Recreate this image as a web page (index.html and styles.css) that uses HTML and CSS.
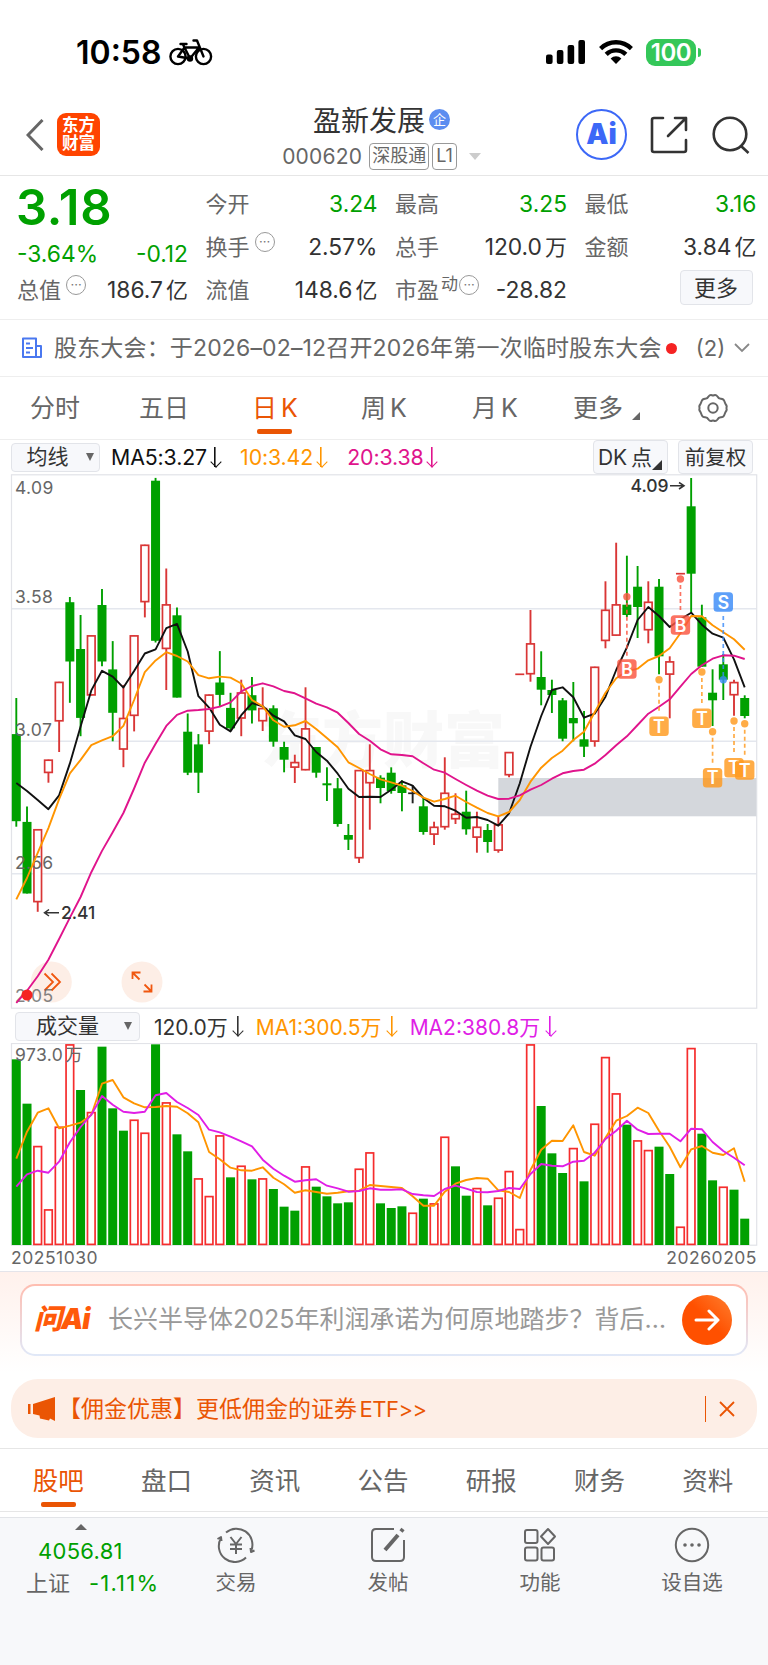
FILE: index.html
```html
<!DOCTYPE html>
<html lang="zh-CN">
<head>
    <meta charset="UTF-8">
    <meta name="viewport" content="width=device-width, initial-scale=1.0">
    <title>盈新发展 000620</title>
    <link rel="stylesheet" href="styles.css">
</head>
<body>
    <!-- status bar -->
    <div class="status">
        <span class="time">10:58</span>
        <svg class="bike" width="44" height="28" viewBox="0 0 44 28" fill="none" stroke="#000" stroke-width="2.4" stroke-linecap="round" stroke-linejoin="round">
            <circle cx="9" cy="18.5" r="7.6"/><circle cx="34.5" cy="18.5" r="7.6"/>
            <path d="M9 18.5L15.5 9.5H30L21 20.5L14 6.5M11.5 6H17.5M34.5 18.5L28 2.5H24.5M9 18.5L20.5 20.5"/>
            <circle cx="21" cy="20.5" r="2" fill="#000"/>
        </svg>
        <div class="status-right">
            <svg width="40" height="26" viewBox="0 0 40 26">
                <rect x="0" y="15.5" width="6.6" height="9.5" rx="2"/><rect x="10.8" y="11" width="6.6" height="14" rx="2"/>
                <rect x="21.6" y="6" width="6.6" height="19" rx="2"/><rect x="32.4" y="1" width="6.6" height="24" rx="2"/>
            </svg>
            <svg width="34" height="26" viewBox="0 0 34 26" fill="none" stroke="#000" stroke-width="4.4">
                <path d="M1.6 9.6A22 22 0 0 1 32.4 9.6"/><path d="M7.2 15.4A14 14 0 0 1 26.8 15.4"/>
                <path d="M11.6 19.4A8 8 0 0 1 22.4 19.4L17 25Z" fill="#000" stroke="none"/>
            </svg>
            <div class="battery">100</div>
        </div>
    </div>

    <!-- title -->
    <div class="header">
        <svg class="back" width="18" height="32" viewBox="0 0 18 32" fill="none" stroke="#666" stroke-width="3"><path d="M16.5 1L2 16L16.5 31"/></svg>
        <div class="logo">东方<br>财富</div>
        <div class="title">
            <div class="name">盈新发展<span class="qi">企</span></div>
            <div class="code">000620<span class="tag">深股通</span><span class="tag">L1</span><i class="caret"></i></div>
        </div>
        <div class="ai-round">Ai</div>
        <svg class="share" width="38" height="38" viewBox="0 0 38 38" fill="none" stroke="#333" stroke-width="2.6" stroke-linecap="round" stroke-linejoin="round">
            <path d="M13 2H4Q2 2 2 4V34Q2 36 4 36H34Q36 36 36 34V24M25 2H36V14M36 2L18 20"/>
        </svg>
        <svg class="search" width="38" height="38" viewBox="0 0 38 38" fill="none" stroke="#333" stroke-width="2.6">
            <circle cx="18" cy="18" r="16.3"/><path d="M28.5 29.5L36.500 37"/>
        </svg>
    </div>

    <!-- quote -->
    <div class="quote">
        <div class="col">
            <div class="price">3.18</div>
            <div class="change"><span>-3.64%</span><span>-0.12</span></div>
            <div class="cell"><label>总值</label><i class="dots">···</i><b>186.7<u>亿</u></b></div>
        </div>
        <div class="col">
            <div class="cell"><label>今开</label><b class="green">3.24</b></div>
            <div class="cell"><label>换手</label><i class="dots">···</i><b>2.57%</b></div>
            <div class="cell"><label>流值</label><b>148.6<u>亿</u></b></div>
        </div>
        <div class="col">
            <div class="cell"><label>最高</label><b class="green">3.25</b></div>
            <div class="cell"><label>总手</label><b>120.0<u>万</u></b></div>
            <div class="cell"><label>市盈</label><sup>动</sup><i class="dots near">···</i><b>-28.82</b></div>
        </div>
        <div class="col">
            <div class="cell"><label>最低</label><b class="green">3.16</b></div>
            <div class="cell"><label>金额</label><b>3.84<u>亿</u></b></div>
            <button class="more">更多</button>
        </div>
    </div>

    <!-- notice -->
    <div class="notice">
        <svg width="22" height="22" viewBox="0 0 22 22" fill="none" stroke="#4a78f0" stroke-width="2" stroke-linejoin="round">
            <path d="M2 1.5H15V20H2ZM15 9H20V20H15M5 6.5H9M5 11H12M5 15.5H9"/>
        </svg>
        <span class="notice-text">股东大会：于2026–02–12召开2026年第一次临时股东大会</span>
        <i class="red-dot"></i>
        <span class="count">(2)</span>
        <svg width="16" height="10" viewBox="0 0 16 10" fill="none" stroke="#888" stroke-width="1.8"><path d="M1 1L8 8L15 1"/></svg>
    </div>

    <!-- period tabs -->
    <div class="periods">
        <span>分时</span>
        <span>五日</span>
        <span class="on">日 K</span>
        <span>周 K</span>
        <span>月 K</span>
        <span class="drop">更多<i></i></span>
        <svg width="30" height="30" viewBox="0 0 30 30" fill="none" stroke="#666" stroke-width="2" stroke-linejoin="round">
            <path d="M10.5 3.5Q12 1.5 14 2.3Q15 2.7 16 2.3Q18 1.5 19.5 3.5Q20.5 5.8 23 5.7Q25.5 5.8 26.3 8Q27 10 27.8 11.5Q29.2 13 28.4 15Q29.2 17 27.8 18.5Q27 20 26.3 22Q25.5 24.2 23 24.3Q20.5 24.2 19.5 26.5Q18 28.5 16 27.7Q15 27.3 14 27.7Q12 28.5 10.5 26.5Q9.5 24.2 7 24.3Q4.5 24.2 3.7 22Q3 20 2.2 18.5Q.8 17 1.6 15Q.8 13 2.2 11.5Q3 10 3.7 8Q4.5 5.8 7 5.7Q9.5 5.8 10.5 3.5Z"/>
            <circle cx="15" cy="15" r="4.7"/>
        </svg>
    </div>

    <!-- K line -->
    <div class="toolbar">
        <button class="select">均线<i></i></button>
        <span class="ma5">MA5:3.27<em></em></span>
        <span class="ma10">10:3.42<em></em></span>
        <span class="ma20">20:3.38<em></em></span>
        <button class="dk">DK 点<i></i></button>
        <button class="fq">前复权</button>
    </div>
    <svg class="chart" id="kline" width="768" height="536" viewBox="0 4 768 536">
        <text class="watermark" x="261" y="293">东方财富</text>
        <path class="grid" d="M11.5 138.7H757M11.5 271.3H757M11.5 403.7H757"/>
        <rect class="frame" x="11.5" y="4.8" width="745.2" height="533.4"/>
        <rect x="498.3" y="308" width="258" height="38.3" fill="#d4d7dc"/>
        <g id="candles"></g>
        <g class="axis">
            <text x="15" y="24.2">4.09</text>
            <text x="15" y="132.5">3.58</text>
            <text x="15" y="266">3.07</text>
            <text x="15" y="398.500">2.56</text>
        </g>
        <circle cx="51.3" cy="512" r="20.5" fill="#fdeee6"/>
        <circle cx="142" cy="512" r="20.5" fill="#fdeee6"/>
        <path class="round-icon" d="M44.5 503.5L53 512L44.5 520.5M51.5 503.5L60 512L51.5 520.5"/>
        <path class="round-icon" d="M139.5 509.5L132.5 502.5M132.5 509V502.5H140.5M144.5 514.5L151.5 521.5M151.5 514.5V521.5H143.5"/>
        <text class="axis low" x="15" y="532">2.05</text>
        <g id="lines"></g>
        <circle cx="27" cy="525" r="5.5" fill="#f52323"/>
        <g class="peak">
            <text x="630.5" y="22">4.09</text>
            <path d="M670 15.7H683M679 12.5L684 15.7L679 19"/>
            <text x="61" y="449">2.41</text>
            <path d="M59 442.8H46M49 439.5L44.5 442.8L49 446"/>
        </g>
        <g id="marks"></g>
    </svg>

    <!-- volume -->
    <div class="toolbar vol-bar">
        <button class="select wide">成交量<i></i></button>
        <span class="now">120.0万<em></em></span>
        <span class="ma10">MA1:300.5万<em></em></span>
        <span class="mav">MA2:380.8万<em></em></span>
    </div>
    <svg class="chart" id="volume" width="768" height="203" viewBox="0 38 768 203">
        <rect class="frame" x="11.5" y="38.5" width="745.2" height="201.7"/>
        <g id="bars"></g>
        <g class="axis"><text x="15" y="56">973.0<tspan dx="2">万</tspan></text></g>
        <g id="vlines"></g>
    </svg>
    <div class="dates"><span>20251030</span><span>20260205</span></div>

    <!-- ask ai -->
    <div class="ask">
        <div class="ask-box">
            <span class="ask-logo">问Ai</span>
            <span class="ask-text">长兴半导体2025年利润承诺为何原地踏步？背后…</span>
            <span class="go"><svg width="26" height="22" viewBox="0 0 26 22" fill="none" stroke="#fff" stroke-width="3" stroke-linecap="round" stroke-linejoin="round"><path d="M2 11H24M15 2L24 11L15 20"/></svg></span>
        </div>
    </div>

    <div class="promo">
        <svg width="28" height="24" viewBox="0 0 28 24" fill="#ea5504"><path d="M0 7H2.500V17H0ZM5 7L27 0V24L22 21.500L21 23.500L12 21.500L11.500 18.500L5 17Z"/></svg>
        <span class="promo-text">【佣金优惠】更低佣金的证券 <span>ETF&gt;&gt;</span></span>
        <svg class="close" width="16" height="16" viewBox="0 0 16 16" fill="none" stroke="#ea5504" stroke-width="1.8"><path d="M1 1L15 15M15 1L1 15"/></svg>
    </div>

    <!-- info tabs -->
    <div class="tabs">
        <span class="on">股吧</span>
        <span>盘口</span>
        <span>资讯</span>
        <span>公告</span>
        <span>研报</span>
        <span>财务</span>
        <span>资料</span>
    </div>

    <!-- bottom bar -->
    <div class="bottom">
        <div class="index">
            <i></i>
            <div class="point">4056.81</div>
            <div class="pct"><span>上证</span>-1.11%</div>
        </div>
        <div class="item">
            <svg width="40" height="36" viewBox="0 0 40 36">
                <path d="M10 5.5A16 16 0 0 1 35.5 23M30 30.5A16 16 0 0 1 5 11M1.5 12L5 10L5.5 14M34.5 21L35 25L38.5 23.5"/>
                <path d="M14.5 10L20 17L25.5 10M20 17V27M14 17.5H26M14 22H26"/>
            </svg>
            <span>交易</span>
        </div>
        <div class="item">
            <svg width="36" height="36" viewBox="0 0 36 36">
                <path d="M24 2H6Q2 2 2 6V30Q2 34 6 34H30Q34 34 34 30V13"/>
                <path d="M28 8L15 23" stroke-width="4"/><path d="M33 2L31 4.5" stroke-width="4"/>
            </svg>
            <span>发帖</span>
        </div>
        <div class="item">
            <svg width="36" height="36" viewBox="0 0 36 36">
                <rect x="3" y="3" width="12.5" height="13" rx="2"/><rect x="3" y="20.5" width="12.5" height="13" rx="2"/>
                <rect x="19.5" y="20.5" width="12.5" height="13" rx="2"/><path d="M26 2L33 9.5L26 17L19 9.5Z"/>
            </svg>
            <span>功能</span>
        </div>
        <div class="item">
            <svg width="36" height="36" viewBox="0 0 36 36">
                <circle cx="18" cy="18" r="16.2"/>
                <path d="M11 18H11.01M18 18H18.01M25 18H25.01" stroke-width="3.6" stroke-linecap="round"/>
            </svg>
            <span>设自选</span>
        </div>
    </div>
    <script src="script.js"></script>
</body>
</html>
```
FILE: styles.css
```css
* {
  box-sizing: border-box;
}

body {
  margin: 0;
  width: 768px;
  height: 1665px;
  overflow: hidden;
  background: #fff;
  color: #333;
  font-family: Inter, "Noto Sans CJK SC", sans-serif;
  font-size: 22px;
}

button {
  font-family: inherit;
  color: #333;
  background: #f7f8fb;
  border: 1px solid #e2e4e9;
  border-radius: 4px;
  padding: 0;
}

i, em, b, u {
  font-style: normal;
  font-weight: normal;
  text-decoration: none;
}

svg {
  display: block;
  flex: none;
}

/* status bar */
.status {
  height: 104px;
  padding: 0 67px 0 76px;
  display: flex;
  align-items: center;
  color: #000;
}

.time {
  width: 93px;
  font-size: 32px;
  font-weight: 600;
}

.status-right {
  margin-left: auto;
  display: flex;
  align-items: center;
  gap: 13px;
}

.battery {
  position: relative;
  width: 50px;
  height: 27px;
  margin-right: 5px;
  border-radius: 9px;
  background: #34c759;
  color: #fff;
  font-size: 24px;
  line-height: 27px;
  font-weight: 600;
  text-align: center;
  letter-spacing: -0.5px;
}

.battery:after {
  content: "";
  position: absolute;
  right: -5px;
  top: 9px;
  width: 3px;
  height: 9px;
  border-radius: 0 3px 3px 0;
  background: #34c759;
}

/* header */
.header {
  height: 72px;
  padding: 0 18px 10px 26px;
  display: flex;
  align-items: center;
  border-bottom: 1px solid #e6e6e6;
}

.logo {
  width: 43px;
  height: 43px;
  margin-left: 13px;
  padding-top: 3px;
  border-radius: 9px;
  background: #ff4400;
  color: #fff;
  font-size: 16.5px;
  line-height: 18px;
  font-weight: bold;
  text-align: center;
}

.title {
  flex: 1;
  padding: 9px 0 0 87px;
  text-align: center;
}

.name {
  display: flex;
  justify-content: center;
  align-items: center;
  height: 35px;
  font-size: 28px;
}

.qi {
  width: 21px;
  height: 21px;
  margin-left: 4px;
  border-radius: 50%;
  background: #5c8df0;
  color: #fff;
  font-size: 13px;
  line-height: 20px;
}

.code {
  display: flex;
  justify-content: center;
  align-items: center;
  height: 40px;
  font-size: 21px;
  letter-spacing: 0.2px;
  color: #666;
}

.code .tag {
  height: 27px;
  margin-left: 3px;
  padding: 0 2px;
  border: 1.5px solid #999;
  border-radius: 4px;
  font-size: 18px;
  line-height: 24px;
  letter-spacing: 0;
}

.code .tag:first-of-type {
  margin-left: 7px;
}

.code .tag + .tag {
  padding: 0 3px;
}

.caret {
  margin-left: 12px;
  border: 6px solid transparent;
  border-top: 7px solid #ccc;
  border-bottom: 0;
}

.ai-round {
  width: 51px;
  height: 51px;
  border: 2.5px solid #3c68f7;
  border-radius: 50%;
  color: #3c68f7;
  font-size: 28px;
  line-height: 46px;
  font-weight: 900;
  text-align: center;
}

.share {
  margin-left: 23px;
}

.search {
  margin-left: 24px;
}

/* quote */
.quote {
  height: 144px;
  padding: 7px 11px 0 17px;
  display: grid;
  grid-template-columns: 171px 172px 172px 172px;
  column-gap: 17.5px;
  border-bottom: 1px solid #eee;
}

.price {
  height: 50px;
  font-size: 49px;
  line-height: 49px;
  font-weight: 600;
  letter-spacing: 0.7px;
  margin-left: -1px;
  color: #00a000;
}

.change {
  height: 36px;
  display: flex;
  justify-content: space-between;
  line-height: 41px;
  font-size: 22.8px;
  color: #00a000;
}

.cell {
  display: flex;
  height: 43px;
  line-height: 42px;
}

.cell label {
  color: #666;
}

.cell b {
  margin-left: auto;
  font-size: 22.8px;
}

.cell u {
  margin-left: 3px;
  font-size: 22px;
}

.cell .green {
  color: #00a000;
}

.cell sup {
  font-size: 17px;
  line-height: 30px;
  color: #666;
  margin-left: 2px;
}

.dots {
  width: 20px;
  height: 20px;
  margin: 6px 0 0 5px;
  border: 1.5px solid #999;
  border-radius: 50%;
  color: #777;
  font-size: 13px;
  line-height: 17px;
  text-align: center;
}

.dots.near {
  margin-left: 1px;
}

.more {
  width: 73px;
  height: 35px;
  margin: 1px 0 0 95px;
  font-size: 22px;
  line-height: 32px;
}

/* notice */
.notice {
  height: 57px;
  padding: 0 18px 0 21px;
  display: flex;
  align-items: center;
  border-bottom: 1px solid #eee;
  color: #666;
}

.notice-text {
  margin-left: 11px;
  width: 612px;
  font-size: 23px;
  letter-spacing: 0.16px;
  line-height: 30px;
  white-space: nowrap;
}

.red-dot {
  width: 11px;
  height: 11px;
  border-radius: 50%;
  background: #f52323;
}

.count {
  margin: 0 auto;
  padding-left: 10px;
}

/* period tabs */
.periods {
  height: 63px;
  padding: 0 40px 0 30px;
  display: grid;
  grid-template-columns: 109px 113px 109px 111px 101px 1fr 30px;
  align-items: center;
  border-bottom: 1px solid #eee;
  font-size: 25px;
  line-height: 62px;
  word-spacing: -3px;
  color: #666;
}

.periods .on {
  color: #ea5504;
}

.periods .on:after,
.tabs .on:after {
  content: "";
  display: block;
  width: 35px;
  height: 5px;
  margin: -10px 0 5px 5px;
  border-radius: 2px;
  background: #ea5504;
}

.drop i {
  display: inline-block;
  margin-left: 9px;
  vertical-align: -3px;
  border-left: 8px solid transparent;
  border-bottom: 8px solid #666;
}

/* chart toolbar */
.toolbar {
  position: relative;
  height: 34px;
  padding: 0 15px 0 11px;
  display: flex;
  align-items: center;
  white-space: nowrap;
}

.select {
  width: 89px;
  height: 29px;
  padding-left: 9px;
  font-size: 21px;
  line-height: 26px;
}

.select i {
  display: inline-block;
  margin-left: 17px;
  vertical-align: 3px;
  border: 4.5px solid transparent;
  border-top: 8px solid #666;
  border-bottom: 0;
}

.toolbar span {
  display: flex;
  align-items: center;
  margin-left: 11px;
  font-size: 21.3px;
  letter-spacing: -0.1px;
}

/* thin down arrow after each average */
.toolbar em {
  position: relative;
  width: 10px;
  height: 20px;
  margin: 0 9px 0 3px;
  background: linear-gradient(currentColor, currentColor) 50% 0 / 1.6px 100% no-repeat;
}

.toolbar em:after {
  content: "";
  position: absolute;
  left: 1.5px;
  bottom: 1px;
  width: 7px;
  height: 7px;
  border-right: 1.6px solid;
  border-bottom: 1.6px solid;
  transform: rotate(45deg);
}

.ma5 { color: #111; }
.ma10 { color: #ff9500; }
.ma20 { color: #e0148c; }
.mav { color: #e01ee6; }
.now { color: #333; }

.toolbar .ma20 {
  margin-left: 12px;
}

.dk, .fq {
  width: 75px;
  height: 34px;
  font-size: 21px;
  line-height: 31px;
  word-spacing: -2px;
}

.dk {
  position: relative;
  margin-left: auto;
  padding-right: 11px;
}

.dk i {
  position: absolute;
  right: 5px;
  bottom: 3px;
  border-left: 10px solid transparent;
  border-bottom: 10px solid #333;
}

.fq {
  margin-left: 10px;
  font-size: 20.5px;
}

.vol-bar {
  height: 33px;
  padding-left: 15px;
  padding-bottom: 1px;
}

.wide {
  width: 125px;
  padding-left: 13px;
}

.wide i {
  margin-left: 25px;
}

.vol-bar span {
  margin-left: 14px;
  font-size: 21px;
  letter-spacing: 0;
}

.vol-bar em {
  margin-left: 5px;
}

.vol-bar span + span {
  margin-left: 4px;
}

/* charts */
.frame {
  fill: none;
  stroke: #e2e3e8;
  stroke-width: 1.2;
}

.grid {
  stroke: #e4e7ee;
  stroke-width: 1.5;
}

.watermark {
  font-size: 61px;
  font-weight: 900;
  fill: #f8f8f8;
}

.axis {
  font-size: 17.5px;
  letter-spacing: 0.4px;
  fill: #666;
}

.low {
  opacity: 0.8;
}

.round-icon {
  fill: none;
  stroke: #f0570f;
  stroke-width: 1.8;
}

.peak {
  font-size: 17.5px;
  font-weight: 500;
  fill: #333;
}

.peak path {
  fill: none;
  stroke: #333;
  stroke-width: 1.5;
}

.mark {
  font-size: 18px;
  font-weight: 600;
  fill: #fff;
  text-anchor: middle;
}

.dates {
  height: 26px;
  padding: 0 11px;
  display: flex;
  justify-content: space-between;
  font-size: 17.5px;
  line-height: 23px;
  letter-spacing: 0.5px;
  color: #666;
  border-bottom: 1px solid #e4e4ea;
}

/* ask ai */
.ask {
  height: 101px;
  padding: 12px 20px 0;
  background: linear-gradient(#fff1ec, #fff);
}

.ask-box {
  height: 72px;
  padding: 0 14px 1px;
  display: flex;
  align-items: center;
  border: 2px solid transparent;
  border-radius: 15px;
  background: linear-gradient(#fff, #fff) padding-box, linear-gradient(#ffbdb0, #e0e8f8) border-box;
}

.ask-logo {
  width: 74px;
  margin-left: -2px;
  font-size: 28px;
  line-height: 36px;
  padding-bottom: 2px;
  font-weight: 900;
  font-style: italic;
  letter-spacing: -1px;
  color: #ff5a0a;
}

.ask-text {
  flex: 1;
  font-size: 25px;
  line-height: 36px;
  padding-bottom: 1px;
  color: #999;
  white-space: nowrap;
}

.go {
  width: 50px;
  height: 50px;
  display: flex;
  align-items: center;
  justify-content: center;
  border-radius: 50%;
  background: linear-gradient(45deg, #ff5000 50%, #ff8030);
}

.promo {
  height: 59px;
  margin: 6px 11px 10px;
  padding: 0 22px 0 17px;
  display: flex;
  align-items: center;
  border-radius: 27px;
  background: #fdeee6;
  color: #ea5504;
  font-size: 23px;
}

.promo-text {
  margin-left: 2px;
  padding-bottom: 3px;
  word-spacing: -4px;
}

.promo-text span {
  font-size: 22px;
  letter-spacing: -0.5px;
}

.close {
  margin-left: auto;
  box-sizing: content-box;
  padding: 5px 0 5px 13px;
  border-left: 1.5px solid #ea5504;
}

/* info tabs */
.tabs {
  height: 64px;
  margin-bottom: 5px;
  padding: 0 6px 0 4px;
  display: grid;
  grid-template-columns: repeat(7, 1fr);
  border-top: 1px solid #e6e6e6;
  border-bottom: 1px solid #e6e6e6;
  font-size: 25.5px;
  line-height: 63px;
  text-align: center;
  color: #666;
}

.tabs .on {
  color: #ea5504;
}

.tabs .on:after {
  margin: -10px auto 0;
}

/* bottom bar */
.bottom {
  height: 148px;
  display: grid;
  grid-template-columns: 160px 152px 152px 152px 152px;
  border-top: 1px solid #e2e4e8;
  background: #f7f8fa;
  color: #666;
}

.index {
  padding: 6px 0 0 26px;
  color: #00a000;
}

.index i {
  display: block;
  width: 0;
  margin-left: 49px;
  border: 6px solid transparent;
  border-top: 0;
  border-bottom: 6px solid #666;
}

.point {
  margin: 5px 0 0 12px;
  line-height: 32px;
  letter-spacing: 0.3px;
}

.pct {
  line-height: 32px;
  letter-spacing: 1.2px;
}

.pct span {
  margin-right: 19px;
  color: #666;
  letter-spacing: 0;
}

.item {
  display: flex;
  flex-direction: column;
  align-items: center;
  padding-top: 9px;
}

.item svg {
  fill: none;
  stroke: #666;
  stroke-width: 2;
  stroke-linejoin: round;
}

.item span {
  margin-top: 5px;
  font-size: 20.5px;
  line-height: 30px;
}
```
FILE: script.js
```js
// x position of each trading day
var START = 16.3;
var STEP = 10.712;

// [color, high, body top, body bottom, low]
var candles = [
    ['g', 228, 264.1, 351.2, 356.7], ['g', 336.4, 351.9, 423.5, 423.5], ['r', 359.2, 359.2, 432.2, 441.8],
    ['r', 289.6, 289.6, 303, 312.7], ['r', 211.8, 211.8, 251.4, 282], ['g', 127, 132.2, 191.5, 232.8],
    ['g', 145, 179, 247.9, 266.2], ['r', 165.3, 165.3, 225.5, 225.5], ['g', 119.1, 135, 191.5, 196.3],
    ['g', 171.1, 199.4, 242.8, 271.3], ['r', 214.9, 247.9, 279.6, 297.2], ['r', 165.3, 165.3, 245.9, 261.4],
    ['r', 74.7, 74.7, 132.2, 147.4], ['g', 7.9, 10.7, 170.8, 172.5], ['r', 98.5, 134.3, 179, 220],
    ['g', 137.4, 145.3, 227.6, 227.6], ['g', 243.5, 261.7, 302.7, 305.1], ['g', 264.1, 274.4, 302.7, 323],
    ['r', 224.5, 224.5, 261.7, 274.1], ['g', 181.1, 212.5, 224.9, 235.9], ['g', 222.8, 237.9, 258.3, 260.7],
    ['r', 209.7, 222.4, 248.6, 266.2], ['g', 207, 225.2, 240.4, 253.4], ['r', 217.3, 238, 251.3, 261],
    ['g', 235.3, 238.3, 271.7, 276.7], ['g', 271.7, 277, 289.7, 302.3], ['r', 284.7, 292, 297.7, 313],
    ['r', 217.3, 258.3, 300.3, 300.3], ['g', 277, 277, 302.7, 307.7], ['g', 297.3, 313.3, 315.3, 331],
    ['g', 308, 318.3, 354, 356.7], ['g', 354, 365, 369.7, 380], ['r', 300, 300, 388.3, 393],
    ['r', 274.3, 300, 313.3, 359.7], ['g', 305.3, 307.7, 318, 333.3], ['g', 297.3, 302.7, 321, 323.7],
    ['g', 310.3, 315.3, 323, 341.3], ['k', 315.3, 323.3, 323.3, 333.3], ['g', 328.3, 336.3, 362, 364.7],
    ['r', 351.7, 356.7, 364.7, 375], ['r', 287.3, 322.7, 357.3, 359.7], ['r', 323.3, 343.7, 349.3, 354],
    ['g', 320.7, 341.7, 359.3, 364.7], ['r', 341.7, 356.7, 367.7, 382.7], ['g', 354, 360, 372, 382.7],
    ['r', 346.7, 354.3, 380.7, 382.7], ['r', 282, 282, 305.3, 307.3], ['r', 204.3, 204.3, 204.3, 204.3],
    ['r', 140, 173.3, 204.3, 211.7], ['g', 181.3, 207, 219.7, 235.3], ['g', 209.7, 220, 225, 243],
    ['g', 228, 230.3, 268.7, 271.3], ['g', 212, 248, 253.3, 271.3], ['g', 241, 269.3, 276.7, 287],
    ['r', 196.7, 196.7, 271.7, 276.7], ['r', 111.3, 139.7, 171, 178.3], ['r', 72.7, 134.3, 165.7, 165.7],
    ['g', 85.7, 134.7, 145, 147], ['g', 96, 116.7, 137, 168], ['r', 111.3, 131.7, 160.3, 173.3],
    ['g', 109, 116.7, 186.3, 204.3], ['r', 186.3, 191.3, 204.7, 248.3], ['r', 103.7, 103.7, 103.7, 103.7],
    ['g', 8, 36.3, 103.7, 142.7], ['g', 134.7, 147.3, 196.7, 196.7], ['g', 199.3, 222.7, 230.3, 256],
    ['g', 184, 194.3, 209.7, 230], ['r', 209.7, 212, 225.3, 245.7], ['g', 225.3, 228, 246, 248.3]
];

var ma5 = [313, 320.9, 329.9, 339.2, 325.4, 293.4, 256.5, 220.4, 200.8, 206.6, 217.6, 201.1, 183.5, 179.4, 158.1, 153.9, 181.5, 226.2, 237.6, 254.8, 261.4, 245.2, 233.1, 236.3, 245.7, 251.3, 265.3, 269, 282, 290.7, 303.7, 318.7, 327, 326.7, 327, 319.7, 311.3, 315.7, 328, 335.7, 336.3, 340.7, 347.7, 347, 350, 355.7, 343.3, 313.3, 276.7, 246, 220, 217.3, 227.3, 247.7, 243.7, 226.7, 200, 177.3, 150, 137, 146, 157, 149.3, 142.7, 154.7, 163.7, 167.7, 189.3, 217.3];
var ma10 = [429.4, 408, 382.9, 358.1, 329.2, 303.4, 289.9, 275.1, 270.3, 266.2, 255.9, 230, 202.1, 190.4, 182.2, 186, 191.5, 205.2, 208.3, 206.6, 207.6, 213.5, 230, 236.3, 250.3, 256.7, 255.3, 251, 259, 268, 277.3, 292.3, 298, 304, 309.3, 312.3, 315.7, 321, 327.7, 331.7, 329, 325.7, 332, 337.7, 343, 346.3, 342, 330, 311.7, 297.7, 288, 280.7, 270, 261.7, 242.3, 222.7, 208.3, 201.3, 198.7, 190.3, 186, 178.3, 163.3, 146, 146.3, 155.3, 162.3, 169.3, 179.7];
var ma20 = [533, 520.7, 506.2, 489.7, 469, 447.6, 427, 402.2, 380.9, 362.3, 343, 318.5, 292.7, 273.8, 255.9, 244.8, 240.7, 240, 239, 236.6, 232.4, 221.4, 216, 213.3, 216.3, 221, 223.3, 228.3, 233.7, 237.3, 242.7, 253, 264, 270.7, 279.3, 284.3, 285, 286.3, 293.3, 299.7, 302.7, 309, 315, 320.7, 325.7, 329, 328.7, 325.3, 319.7, 315, 308.7, 303.3, 301, 299.7, 293.7, 285, 275.3, 266.3, 255, 243.7, 236.7, 229.3, 216.7, 204, 195.3, 188.7, 185.3, 185.7, 189];

// volume bars, in thirds of a pixel
var volColor = 'ggrrrrgrgggrrgrggrrrgrgrgggrggggrrggg' + 'rgrrggrgrrrrgggrgrrrgrrggrrggrgg';
var vol = [163, 296, 423, 613, 365, 118, 255, 321, 125, 310, 377, 344, 383, 118, 292, 388, 439, 520, 573, 391, 517, 482, 523, 520, 552, 605, 617, 484, 545, 574, 595, 592, 491, 442, 595, 609, 604, 623, 581, 595, 395, 484, 572, 549, 601, 578, 498, 672, 118, 303, 445, 504, 429, 529, 356, 156, 265, 359, 406, 435, 425, 507, 665, 129, 386, 526, 545, 554, 641];
var vma1 = [461, 380, 323, 310, 370, 362, 353, 330, 236, 225, 277, 295, 307, 306, 303, 305, 325, 352, 441, 463, 488, 496, 497, 487, 518, 538, 563, 556, 561, 566, 563, 559, 557, 540, 543, 546, 549, 574, 602, 602, 560, 536, 525, 519, 521, 556, 561, 579, 495, 434, 407, 408, 361, 441, 452, 398, 347, 333, 308, 324, 377, 425, 487, 433, 423, 443, 450, 430, 530];
var vma2 = [545, 508, 497, 503, 470, 412, 366, 329, 273, 299, 320, 324, 320, 271, 264, 291, 309, 330, 374, 382, 395, 409, 424, 464, 491, 512, 530, 526, 523, 542, 550, 560, 558, 550, 554, 554, 553, 567, 571, 573, 552, 542, 551, 561, 562, 558, 549, 552, 507, 477, 482, 484, 470, 467, 443, 402, 377, 347, 374, 387, 386, 386, 409, 371, 373, 411, 438, 458, 481];

// [letter, day, dot y, box y]
var marks = [
    ['B', 57, 126.7, 199], ['T', 60, 209.7, 256.3], ['B', 62, 109, 155], ['T', 64, 202, 248.3],
    ['T', 65, 261.7, 307.7], ['S', 66, 209.7, 132], ['T', 67, 251, 297.7], ['T', 68, 253.7, 300]
];

function x(i) {
    return START + STEP * i;
}

function put(id, html) {
    document.getElementById(id).innerHTML = html;
}

function line(data, color, k) {
    var pts = data.map(function (v, i) {
        return x(i).toFixed(1) + ',' + (v / k).toFixed(1);
    });
    return '<polyline points="' + pts.join(' ') + '" fill="none" stroke="' + color + '" stroke-width="1.9" stroke-linejoin="round"/>';
}

function box(cx, top, bottom, color, hollow) {
    if (hollow) {
        return '<rect x="' + (cx - 3.8) + '" y="' + (top + 0.6) + '" width="7.6" height="' + (bottom - top - 1.2) + '" fill="#fff" stroke="' + color + '" stroke-width="1.7"/>';
    }
    return '<rect x="' + (cx - 4.5) + '" y="' + top + '" width="9" height="' + (bottom - top) + '" fill="' + color + '"/>';
}

var colors = { g: '#00a000', r: '#d93636', k: '#222' };
put('candles', candles.map(function (c, i) {
    var color = colors[c[0]];
    var s = '<path d="M' + x(i) + ' ' + c[1] + 'V' + c[4] + '" stroke="' + color + '" stroke-width="1.9"/>';
    if (c[2] === c[3]) {
        return s + '<path d="M' + (x(i) - 4.5) + ' ' + c[2] + 'h9" stroke="' + color + '" stroke-width="1.7"/>';
    }
    return s + box(x(i), c[2], c[3], color, c[0] === 'r');
}).join(''));
put('lines', line(ma5, '#111', 1) + line(ma10, '#ff9500', 1) + line(ma20, '#e0148c', 1));

put('bars', vol.map(function (v, i) {
    var red = volColor[i] === 'r';
    return box(x(i), v / 3, 240, red ? '#f52d2d' : '#00a000', red);
}).join(''));
put('vlines', line(vma1, '#ff9500', 3) + line(vma2, '#e01ee6', 3));

var markColors = { B: '#fb5540', T: '#ff9a1e', S: '#3b8cf8' };
put('marks', marks.map(function (m) {
    var cx = x(m[1]);
    var color = markColors[m[0]];
    var dash = m[0] === 'S' ? 'M' + cx + ' 146V209' : 'M' + cx + ' ' + (m[2] + 6) + 'V' + (m[3] - 13);
    return '<g opacity="0.82"><circle cx="' + cx + '" cy="' + m[2] + '" r="3.7" fill="' + color + '"/>' +
        '<path d="' + dash + '" stroke="' + color + '" stroke-width="1.7" stroke-dasharray="4 3"/>' +
        '<rect x="' + (cx - 9.7) + '" y="' + (m[3] - 9.7) + '" width="19.4" height="19.4" rx="3.5" fill="' + color + '"/></g>' +
        '<text class="mark" x="' + cx + '" y="' + (m[3] + 6.5) + '">' + m[0] + '</text>';
}).join(''));
```
